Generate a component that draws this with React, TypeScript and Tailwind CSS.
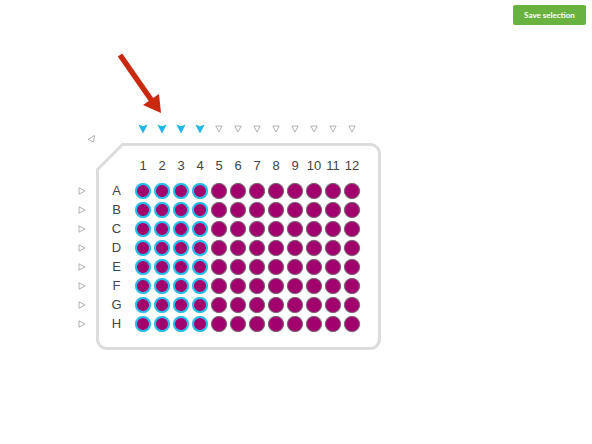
import React from "react";

const COLS = Array.from({ length: 12 }, (_, i) => i + 1);
const ROWS = ["A", "B", "C", "D", "E", "F", "G", "H"];
const SELECTED = new Set([1, 2, 3, 4]);

function DownTri({ filled }: { filled: boolean }) {
  return filled ? (
    <svg width="10" height="10" viewBox="0 0 10 10">
      <path d="M0.3 0.6 L5 2.2 L9.7 0.6 L5 9.6 Z" fill="#1fb6e8" />
    </svg>
  ) : (
    <svg width="8" height="8" viewBox="0 0 8 8">
      <path d="M0.8 1 L7.2 1 L4 7 Z" fill="none" stroke="#a8a8a8" strokeWidth="0.9" />
    </svg>
  );
}

function RightTri() {
  return (
    <svg width="8" height="8" viewBox="0 0 8 8">
      <path d="M1 0.8 L7 4 L1 7.2 Z" fill="none" stroke="#a8a8a8" strokeWidth="0.9" />
    </svg>
  );
}

function CornerTri() {
  return (
    <svg width="9" height="9" viewBox="0 0 9 9">
      <path d="M1 5.5 L7.5 1.5 L6.5 8 Z" fill="none" stroke="#a8a8a8" strokeWidth="0.9" />
    </svg>
  );
}

function Well({ selected }: { selected: boolean }) {
  return selected ? (
    <div className="w-[16px] h-[16px] rounded-full bg-[#a2006d] border-[2px] border-[#27bdea] shadow-[0_0_1px_#7fd8f5]" />
  ) : (
    <div className="w-[16px] h-[16px] rounded-full bg-[#a2006d] border border-[#7d6174] shadow-[0_0_1px_#999]" />
  );
}

export default function App() {
  return (
    <div className="relative w-[592px] h-[444px] bg-white overflow-hidden font-['Liberation_Sans',Arial,sans-serif]">
      <div className="flex justify-end pt-[5px] pr-[6px]">
        <button className="h-[20px] w-[73px] rounded-[2px] bg-[#6ab23f] text-white text-[8px] font-bold font-['Lato','Open_Sans',sans-serif] leading-none">
          Save selection
        </button>
      </div>

      <svg className="absolute left-0 top-0 pointer-events-none" width="200" height="130" viewBox="0 0 200 130">
        <line x1="120" y1="55" x2="152" y2="101" stroke="#c8290f" strokeWidth="5.5" />
        <polygon points="161,113 143,105 159,94" fill="#c8290f" />
      </svg>

      <div className="flex mt-[99px] ml-[76px]">
        <div className="flex flex-col w-[12px] mr-[8px]">
          <div className="mt-[10px] h-[9px] w-[9px] ml-[11px] flex items-center justify-center">
            <CornerTri />
          </div>
          <div className="flex flex-col items-center gap-[3px] mt-[40px]">
            {ROWS.map((r) => (
              <div key={r} className="h-[16px] flex items-center justify-center">
                <RightTri />
              </div>
            ))}
          </div>
        </div>

        <div className="flex flex-col">
          <div className="flex gap-[3px] pl-[39px] h-[10px] mb-[9px]">
            {COLS.map((c) => (
              <div key={c} className="w-[16px] flex items-center justify-center">
                <DownTri filled={SELECTED.has(c)} />
              </div>
            ))}
          </div>

          <div className="bg-[#dcdcdc] p-[3px] rounded-[11px] [clip-path:polygon(26px_0,100%_0,100%_100%,0_100%,0_26px)]">
            <div className="bg-white rounded-[8px] [clip-path:polygon(24px_0,100%_0,100%_100%,0_100%,0_24px)] pl-[10px] pr-[18px] pt-[12px] pb-[15px]">
              <div className="grid grid-cols-[23px_repeat(12,16px)] gap-x-[3px] gap-y-[3px] text-[13px] text-[#444444]">
                <div className="h-[22px]" />
                {COLS.map((c) => (
                  <div key={c} className="h-[22px] leading-[16px] text-center whitespace-nowrap flex justify-center">
                    {c}
                  </div>
                ))}
                {ROWS.map((r) => (
                  <React.Fragment key={r}>
                    <div className="h-[16px] leading-[16px] pr-[8px] text-center">{r}</div>
                    {COLS.map((c) => (
                      <Well key={c} selected={SELECTED.has(c)} />
                    ))}
                  </React.Fragment>
                ))}
              </div>
            </div>
          </div>
        </div>
      </div>
    </div>
  );
}
